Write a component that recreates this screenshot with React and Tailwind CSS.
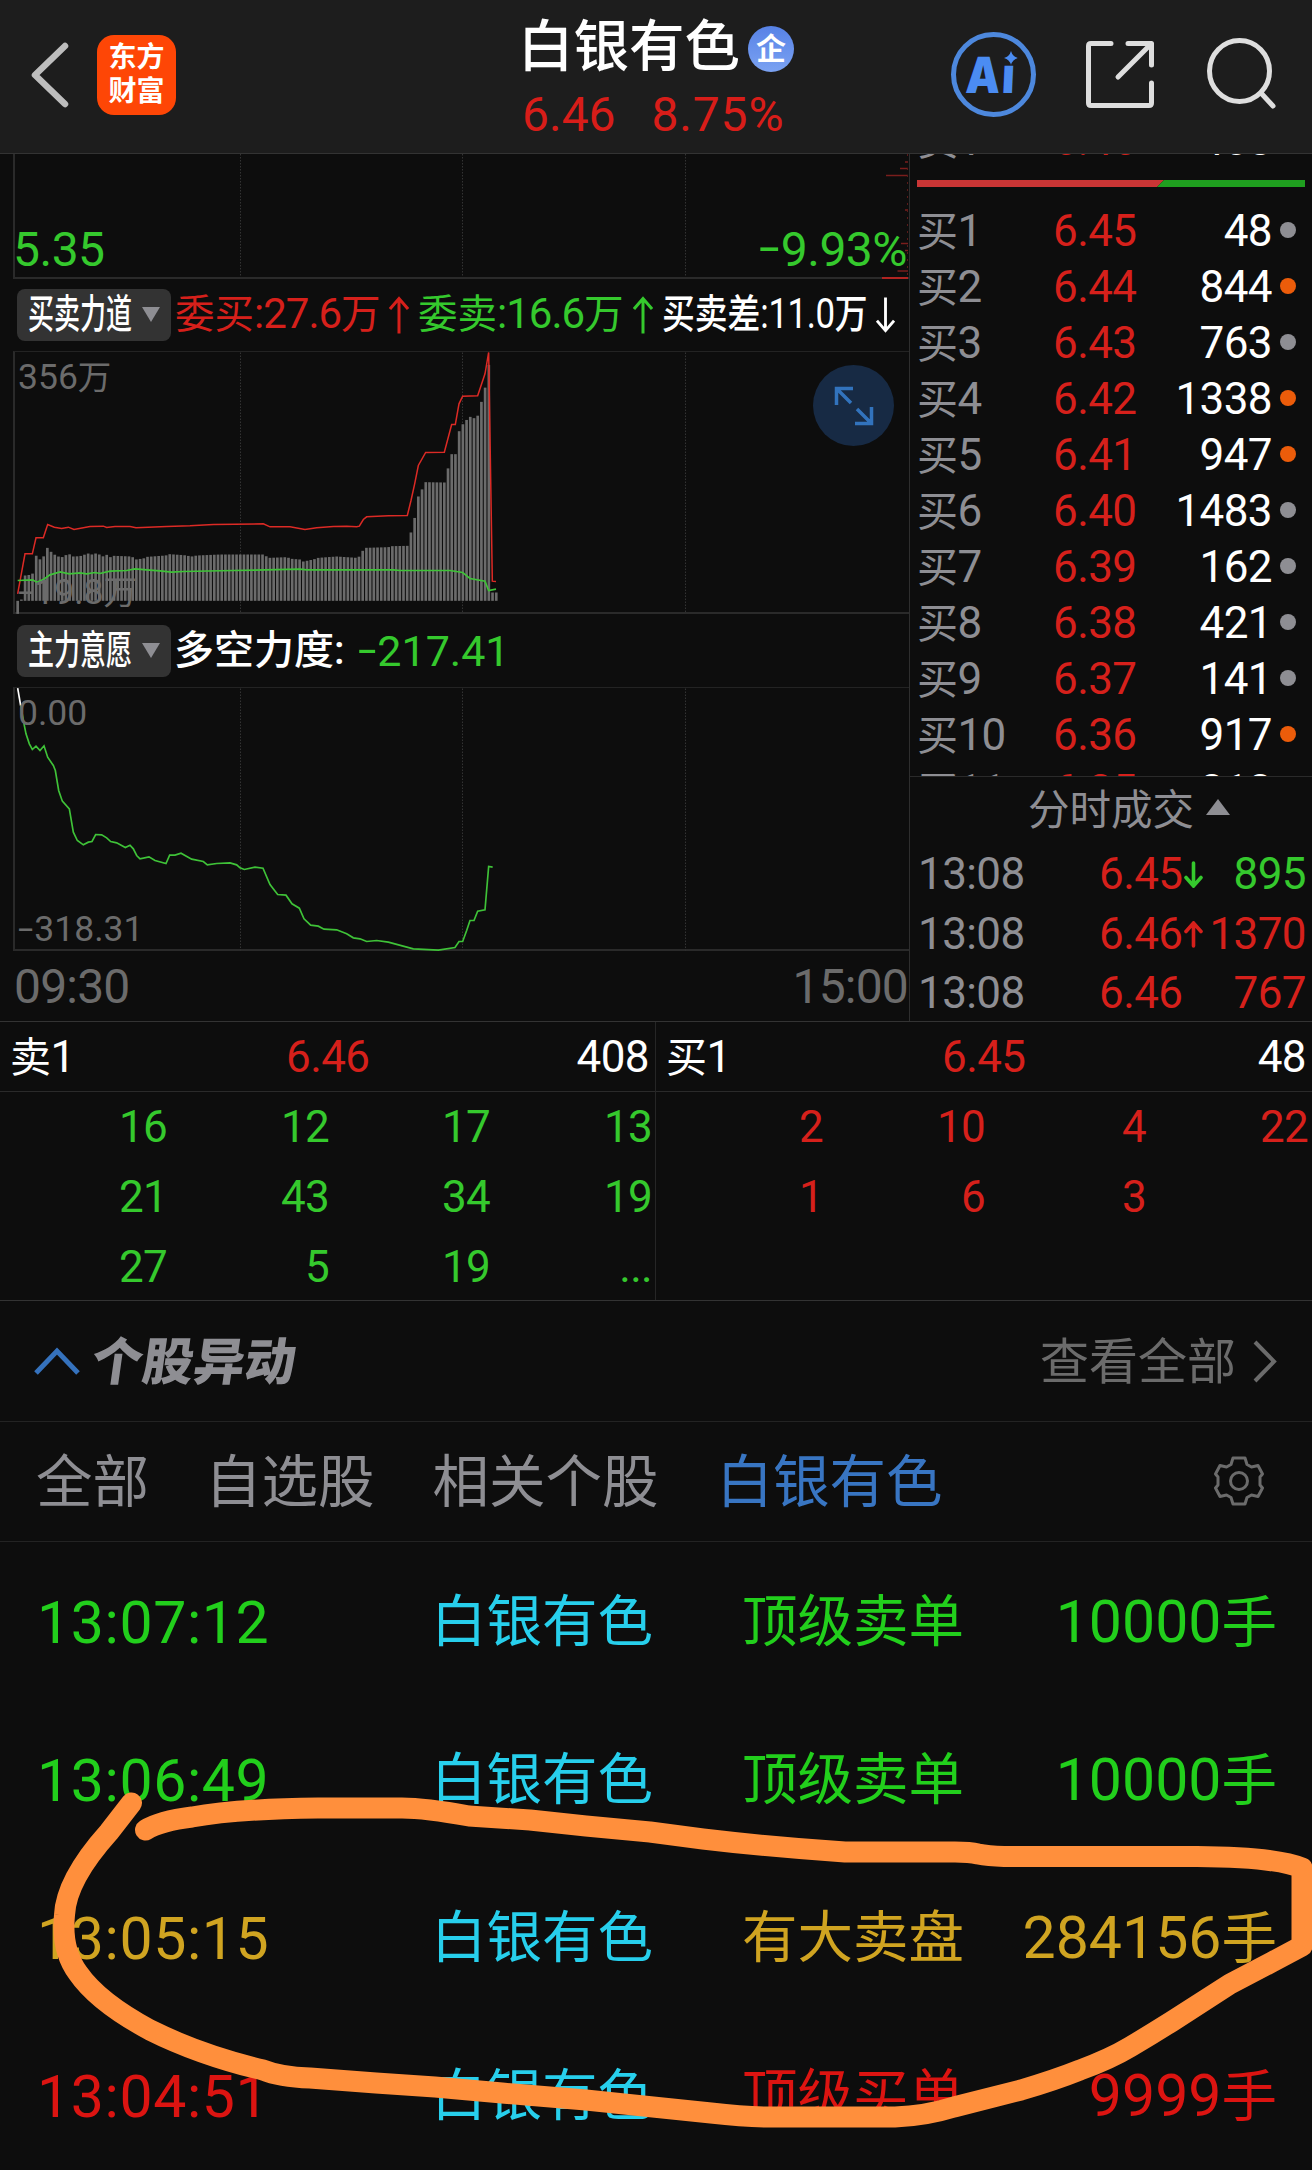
const BIDS = [
  { n: 1, price: '6.45', qty: '48' },
  { n: 2, price: '6.44', qty: '844', hot: true },
  { n: 3, price: '6.43', qty: '763' },
  { n: 4, price: '6.42', qty: '1338', hot: true },
  { n: 5, price: '6.41', qty: '947', hot: true },
  { n: 6, price: '6.40', qty: '1483' },
  { n: 7, price: '6.39', qty: '162' },
  { n: 8, price: '6.38', qty: '421' },
  { n: 9, price: '6.37', qty: '141' },
  { n: 10, price: '6.36', qty: '917', hot: true },
  { n: 11, price: '6.35', qty: '818' },
];

const TICKS = [
  { price: '6.45', dir: 'down', qty: '895', color: 'text-[#35c92d]' },
  { price: '6.46', dir: 'up', qty: '1370', color: 'text-[#d6201b]' },
  { price: '6.46', dir: null, qty: '767', color: 'text-[#d6201b]' },
];

const ALERTS = [
  { time: '13:07:12', kind: '顶级卖单', qty: '10000', color: 'text-[#22cf1c]' },
  { time: '13:06:49', kind: '顶级卖单', qty: '10000', color: 'text-[#22cf1c]' },
  { time: '13:05:15', kind: '有大卖盘', qty: '284156', color: 'text-[#d0a421]' },
  { time: '13:04:51', kind: '顶级买单', qty: '9999', color: 'text-[#dc1411]' },
];

// top edge of the grey bars, as [x, y] in chart space
const BAR_TOPS = [
  [53, 1420], [64, 1378], [75, 1305], [97, 1302], [108, 1245], [119, 1257], [130, 1250], [141, 1221],
  [152, 1233], [163, 1242], [175, 1248], [186, 1250], [197, 1244], [208, 1241], [219, 1248], [240, 1247],
  [264, 1239], [276, 1242], [287, 1239], [298, 1242], [310, 1248], [320, 1243], [331, 1250], [342, 1246],
  [395, 1248], [408, 1257], [430, 1254], [442, 1249], [497, 1245], [508, 1241], [552, 1244], [575, 1248],
  [590, 1245], [660, 1242], [790, 1242], [800, 1248], [810, 1252], [860, 1250], [875, 1255], [900, 1257],
  [910, 1263], [940, 1257], [955, 1252], [1010, 1248], [1070, 1252], [1080, 1247], [1088, 1231], [1098, 1222],
  [1165, 1220], [1176, 1217], [1223, 1216], [1233, 1175], [1244, 1132], [1255, 1068], [1266, 1047],
  [1277, 1025], [1334, 1026], [1344, 984], [1355, 941], [1367, 941], [1377, 873], [1388, 852], [1399, 839],
  [1411, 829], [1422, 833], [1433, 826], [1444, 785], [1455, 745], [1466, 640], [1477, 1356], [1490, 1356],
];

const BUY_LINE =
  '53,1360 75,1240 97,1240 108,1192 130,1192 143,1152 163,1160 185,1164 205,1160 222,1167 270,1158 310,1157 320,1161 345,1158 390,1158 408,1162 500,1158 570,1156 640,1152 790,1150 810,1159 870,1159 915,1167 950,1162 1000,1158 1040,1157 1070,1159 1078,1157 1090,1137 1100,1129 1165,1126 1222,1125 1233,1080 1244,1030 1255,975 1277,936 1333,935 1355,852 1366,852 1377,790 1388,767 1433,766 1455,700 1466,636 1477,1322 1488,1323';
const SELL_LINE =
  '53,1320 98,1318 110,1325 130,1317 150,1303 180,1294 208,1300 240,1297 260,1300 285,1296 300,1299 330,1292 380,1290 405,1285 440,1288 480,1291 515,1295 550,1293 700,1290 900,1286 920,1288 1180,1288 1200,1290 1350,1290 1388,1296 1410,1314 1455,1322 1466,1350 1488,1346';
const FORCE_LINE =
  '62,315 72,370 78,400 88,430 97,447 108,437 120,450 132,436 143,470 160,495 166,510 176,570 187,602 208,625 220,695 232,720 250,733 265,725 276,723 287,702 305,703 320,712 332,723 350,727 376,741 390,734 400,745 410,765 420,775 447,769 465,780 498,789 509,764 525,764 543,758 575,776 610,783 622,793 650,789 690,787 710,793 720,802 733,807 765,800 789,803 810,852 833,882 858,884 876,910 898,923 912,955 932,974 955,977 972,986 1010,988 1040,1000 1060,1012 1080,1015 1100,1023 1130,1020 1165,1025 1240,1045 1315,1049 1365,1041 1377,1023 1388,1023 1400,990 1410,960 1422,960 1433,932 1455,928 1466,798 1478,800';

function topAt(x) {
  const i = BAR_TOPS.findIndex((p) => p[0] >= x);
  if (i <= 0) return BAR_TOPS[i === 0 ? 0 : BAR_TOPS.length - 1][1];
  const [x0, y0] = BAR_TOPS[i - 1];
  const [x1, y1] = BAR_TOPS[i];
  return y0 + ((y1 - y0) * (x - x0)) / (x1 - x0);
}

const BARS = Array.from({ length: 130 }, (_, i) => {
  const x = 53 + i * 11.13;
  return { x, y: i === 0 ? 1420 : topAt(x) };
});

function GridLines({ y1, y2 }) {
  return [240.5, 462.5, 685.5].map((x) => (
    <line key={x} x1={x} x2={x} y1={y1} y2={y2} stroke="#333" strokeWidth="1" strokeDasharray="1.5 1.5" />
  ));
}

// wide, slightly raised minus sign
function Minus() {
  return <span className="inline-block w-[0.46em] origin-left -translate-y-[0.04em] scale-x-[1.55]">-</span>;
}

function Pill({ children }) {
  return (
    <div className="flex h-[52px] w-[154px] flex-none items-center rounded-lg bg-[#333] pl-[11px]">
      <div className="h-[52px] w-[103px]">
        <span className="inline-block origin-left scale-x-[0.65] text-[40px] font-medium leading-[52px] whitespace-nowrap text-white">
          {children}
        </span>
      </div>
      <svg className="ml-[11px] h-[15px] w-[18px]" viewBox="0 0 18 15">
        <path d="M0 0H18L9 15Z" fill="#8e8e93" />
      </svg>
    </div>
  );
}

function LongArrow({ down, className }) {
  return (
    <svg
      className={className}
      viewBox="0 0 20 38"
      fill="none"
      stroke="currentColor"
      strokeWidth="3"
      transform={down ? 'rotate(180)' : undefined}
    >
      <path d="M10 37.500V2M1 13L10 2.500L19 13" />
    </svg>
  );
}

function Header() {
  return (
    <header className="flex h-[154px] items-start border-b border-[#333] bg-[#1d1d1d]">
      <svg className="mt-[41px] ml-[29px] h-[68px] w-[42px]" viewBox="0 0 42 68" fill="none">
        <path d="M36 5L6 34L36 63" stroke="#bdbdbd" strokeWidth="6.500" strokeLinecap="round" strokeLinejoin="round" />
      </svg>
      <div className="mt-[35px] ml-[26px] flex h-20 w-[79px] flex-col items-center justify-center rounded-[17px] bg-[#fe4606] text-[28px] font-bold leading-[34px] text-white">
        <span>东方</span>
        <span>财富</span>
      </div>

      <div className="ml-[342px] w-[293px]">
        <div className="flex h-[72px] items-end">
          <h1 className="h-[54px] text-[55.500px] font-medium leading-[60px] text-white">白银有色</h1>
          <span className="ml-[8px] flex h-[46px] w-[46px] items-center justify-center rounded-full bg-linear-to-b from-[#5782e6] to-[#7ba2f2] text-[30px] font-bold leading-none text-white">
            企
          </span>
        </div>
        <div className="mt-[17px] flex gap-[36px] pl-[4px] text-[48px] leading-[52px] text-[#d81d19]">
          <span>6.46</span>
          <span className="tracking-[0.8px]">8.75%</span>
        </div>
      </div>

      <div className="relative mt-[32px] ml-[140px] flex h-[85px] w-[85px] items-center justify-center rounded-full border-[5px] border-[#4d88dd] text-[#4b8cf2]">
        <span className="-ml-1 scale-x-[0.87] -skew-x-3 font-[Inter] text-[50px] font-black leading-none tracking-[2px]">
          Aı
        </span>
        <svg className="absolute top-[14px] left-[48px] h-[14px] w-[14px]" viewBox="0 0 14 14">
          <path d="M7 0Q8.500 5.500 14 7Q8.500 8.500 7 14Q5.500 8.500 0 7Q5.500 5.500 7 0Z" fill="currentColor" />
        </svg>
      </div>
      <svg className="mt-[40px] ml-[49px] h-[69px] w-[70px]" viewBox="0 0 70 69" fill="none" stroke="#dedede" strokeWidth="5" strokeLinecap="round" strokeLinejoin="round">
        <path d="M26 3.500H6Q3.500 3.500 3.500 6V63Q3.500 65.500 6 65.500H64Q66.500 65.500 66.500 63V43" />
        <path d="M43 3.500H66.500V25M65 5L33 37" />
      </svg>
      <svg className="mt-[36px] ml-[50px] h-[75px] w-[74px]" viewBox="0 0 74 75" fill="none" stroke="#dedede" strokeWidth="5" strokeLinecap="round">
        <ellipse cx="34.500" cy="35" rx="30" ry="30.500" />
        <path d="M56 57L68 70" />
      </svg>
    </header>
  );
}

function PriceChart() {
  const marks = [
    [162, 905], [168.500, 900], [175.500, 886], [210, 905], [243.500, 901], [250.500, 905], [271, 897.500],
  ];
  return (
    <div className="relative h-[125px] border-b-2 border-l-2 border-[#2a2a2a]">
      <svg className="h-[125px] w-[893px]" viewBox="15 154 893 125">
        <GridLines y1={154} y2={277} />
        {marks.map(([y, x]) => (
          <line key={y} x1={x} x2="908" y1={y} y2={y} stroke="#7a1e1c" strokeWidth="1.500" />
        ))}
        <line x1="882" x2="908" y1="278" y2="278" stroke="#b02421" strokeWidth="2" />
        <line x1="907.500" x2="907.500" y1="154" y2="278" stroke="#5a1a19" strokeDasharray="2 5" />
      </svg>
      <div className="absolute inset-x-0 top-[70px] -ml-[2px] flex justify-between pr-[2px] text-[48px] leading-[52px] text-[#35c92d]">
        <span className="tracking-[-0.5px]">5.35</span>
        <span className="tracking-[-0.5px]">
          <Minus />
          9.93%
        </span>
      </div>
    </div>
  );
}

function OrderForceChart() {
  return (
    <div className="relative h-[263px] border-t border-b-2 border-l-2 border-t-[#232323] border-b-[#2a2a2a] border-l-[#2a2a2a]">
      <svg className="h-[262px] w-[893px]" viewBox="15 351.500 893 262">
        <GridLines y1={352} y2={613} />
        <g transform="translate(0 140) scale(.33333)">
          {BARS.map((b) => (
            <rect
              key={b.x}
              x={b.x - 4}
              y={Math.min(b.y, 1381)}
              width="8"
              height={Math.abs(1381 - b.y)}
              fill="#6b6b6b"
            />
          ))}
          <polyline points={BUY_LINE} fill="none" stroke="#dc2a25" strokeWidth="4.500" />
          <polyline points={SELL_LINE} fill="none" stroke="#3fc238" strokeWidth="5" />
        </g>
      </svg>
      <span className="absolute top-[5px] left-[3px] text-[35.500px] leading-[40px] text-[#6b6b6b]">
        356<span className="text-[33.500px]">万</span>
      </span>
      <span className="absolute top-[220px] left-[3px] text-[35.500px] leading-[40px] text-[#6b6b6b]">
        <Minus />
        19.8<span className="text-[33.500px]">万</span>
      </span>
      <button className="absolute top-[13px] right-[15px] flex h-[81px] w-[81px] items-center justify-center rounded-full bg-[#172a44]">
        <svg className="h-[40px] w-[40px]" viewBox="0 0 40 40" fill="none" stroke="#3273bd" strokeWidth="3.500">
          <path d="M19 2.500H2.500V19M2.500 2.500L17 17M21 37.500H37.500V21M37.500 37.500L23 23" />
        </svg>
      </button>
    </div>
  );
}

function IntentChart() {
  return (
    <div className="relative h-[264px] border-t border-b-2 border-l-2 border-t-[#232323] border-b-[#2a2a2a] border-l-[#2a2a2a]">
      <svg className="h-[263px] w-[893px]" viewBox="15 687.500 893 263">
        <GridLines y1={688} y2={950} />
        <g transform="translate(0 600) scale(.33333)" fill="none" strokeWidth="5">
          <polyline points={FORCE_LINE} stroke="#3fc238" />
          <polyline points="53,263 62,315" stroke="#fff" />
        </g>
      </svg>
      <span className="absolute top-[5px] left-[3px] text-[35.500px] leading-[40px] text-[#6b6b6b]">0.00</span>
      <span className="absolute top-[221px] left-[3px] text-[35.500px] leading-[40px] text-[#6b6b6b]">
        <Minus />
        318.31
      </span>
    </div>
  );
}

function Charts() {
  return (
    <div className="w-[910px] flex-none border-r border-[#2e2e2e] pl-[13px]">
      <PriceChart />
      <div className="flex h-[72px] items-center pb-[1px] pl-[4px] text-[39.5px] leading-[52px] whitespace-nowrap">
        <Pill>买卖力道</Pill>
        <span className="ml-[4px] w-[214px] text-[#d6201b]">
          委买<span className="text-[42px] tracking-[-1px]">:27.6</span>万
        </span>
        <LongArrow className="h-[38px] w-[20px] text-[#d6201b]" />
        <span className="ml-[9px] w-[215px] text-[#35c92d]">
          委卖<span className="text-[42px] tracking-[-1px]">:16.6</span>万
        </span>
        <LongArrow className="h-[38px] w-[20px] text-[#35c92d]" />
        <span className="ml-[9px] w-[214px] text-white">
          <span className="inline-block origin-left scale-x-[0.83] font-medium">
            买卖差<span className="text-[42px] font-normal tracking-[-0.5px]">:11.0</span>万
          </span>
        </span>
        <LongArrow down className="h-[38px] w-[19px] flex-none text-white" />
      </div>
      <OrderForceChart />
      <div className="flex h-[73px] items-center pl-[4px] leading-[52px]">
        <Pill>主力意愿</Pill>
        <span className="ml-[3px] text-[40px] font-medium text-white">多空力度:</span>
        <span className="ml-[13px] text-[43px] text-[#35c92d]">
          <Minus />
          217.41
        </span>
      </div>
      <IntentChart />
      <div className="flex h-[70px] justify-between pt-[10px] pr-[1px] pl-[1px] text-[48px] leading-[52px] tracking-[-0.8px] text-[#6b6b6b]">
        <span>09:30</span>
        <span>15:00</span>
      </div>
    </div>
  );
}

function BookRow({ side, n, price, qty, hot, noDot }) {
  return (
    <div className="flex h-[56px] flex-none items-center text-[44px] leading-[56px] tracking-[-0.6px]">
      <span className="w-[136px] text-[#8e8e93]">
        <span className="text-[41px]">{side}</span>
        {n}
      </span>
      <span className="w-[90px] text-[#d6201b]">{price}</span>
      <span className="flex-1 text-right text-white">{qty}</span>
      <span className="ml-[8px] flex w-[32px] -translate-y-px">
        {!noDot && <i className={hot ? 'h-4 w-4 rounded-full bg-[#ec5c0a]' : 'h-4 w-4 rounded-full bg-[#8e8e93]'} />}
      </span>
    </div>
  );
}

function TickArrow({ dir }) {
  if (!dir) return <span className="w-[23px]" />;
  return (
    <svg
      className={dir === 'up' ? 'mx-[2px] w-[19px] text-[#d6201b]' : 'mx-[2px] w-[19px] rotate-180 text-[#35c92d]'}
      viewBox="0 0 19 27"
      fill="none"
      stroke="currentColor"
      strokeWidth="3.600"
      strokeLinecap="round"
    >
      <path d="M9.500 25V2.500M2 10.500L9.500 2L17 10.500" />
    </svg>
  );
}

function OrderBook() {
  return (
    <div className="flex-1">
      <div className="flex h-[623px] flex-col overflow-hidden border-b border-[#2a2a2a] pl-[7px]">
        <div className="-mt-[42px]">
          <BookRow side="卖" n={1} price="6.46" qty="408" noDot />
        </div>
        <svg className="mt-[12px] h-[7px] w-[388px] flex-none" viewBox="0 0 388 7">
          <path d="M0 0H247L240 7H0Z" fill="#c93535" />
          <path d="M247 0H388V7H240Z" fill="#1f9f1f" />
        </svg>
        <div className="mt-[16px]">
          {BIDS.map((b) => (
            <BookRow key={b.n} side="买" {...b} />
          ))}
        </div>
      </div>

      <div className="flex h-[68px] items-center justify-center pl-[36px] text-[41.5px] leading-[60px] text-[#8e8e93]">
        分时成交
        <svg className="mb-[8px] ml-[12px] h-[16px] w-[24px]" viewBox="0 0 24 16">
          <path d="M12 0L24 16H0Z" fill="#8e8e93" />
        </svg>
      </div>
      {TICKS.map((t, i) => (
        <div key={i} className="flex h-[59.500px] items-center pr-[6px] pl-[8px] text-[44px] leading-[59px] tracking-[-0.6px]">
          <span className="w-[181px] text-[#8e8e93]">13:08</span>
          <span className="text-[#d6201b]">{t.price}</span>
          <TickArrow dir={t.dir} />
          <span className={`flex-1 text-right ${t.color}`}>{t.qty}</span>
        </div>
      ))}
    </div>
  );
}

function DepthPanel({ side, price, total, cells, color, className }) {
  return (
    <div className={`w-[656px] ${className}`}>
      <div className="flex h-[70px] items-center border-b border-[#2a2a2a] pr-[6px] text-[44px] tracking-[-0.6px] text-white">
        <span className="w-[286px] pl-[10px]">
          <span className="text-[41px]">{side}</span>1
        </span>
        <span className="flex-1 text-[#d6201b]">{price}</span>
        <span>{total}</span>
      </div>
      <div className={`grid grid-cols-[167px_162px_161px_162px] text-right text-[44px] leading-[70px] tracking-[-0.7px] ${color}`}>
        {cells.map((c, i) => (
          <span key={i}>{c}</span>
        ))}
      </div>
    </div>
  );
}

function Depth() {
  return (
    <section className="flex h-[279px] border-b border-[#333]">
      <DepthPanel
        side="卖"
        price="6.46"
        total="408"
        color="text-[#35c92d]"
        className="border-r border-[#262626]"
        cells={['16', '12', '17', '13', '21', '43', '34', '19', '27', '5', '19', '...']}
      />
      <DepthPanel
        side="买"
        price="6.45"
        total="48"
        color="text-[#d6201b]"
        className=""
        cells={['2', '10', '4', '22', '1', '6', '3']}
      />
    </section>
  );
}

function Alerts() {
  return (
    <section>
      <div className="flex h-[121px] items-center border-b border-[#232323]">
        <svg className="ml-[34px] h-[28px] w-[46px]" viewBox="0 0 46 28" fill="none">
          <path d="M2 26L23 4L44 26" stroke="#3572bd" strokeWidth="5" />
        </svg>
        <h2 className="mt-[3px] ml-[12px] -skew-x-[8deg] text-[51px] font-black leading-[60px] text-[#8e8e93]">个股异动</h2>
        <span className="mt-[3px] ml-auto text-[49px]">
          <span className="text-[#6b6b6b]">查看全部</span>
        </span>
        <svg className="mr-[35px] ml-[17px] h-[43px] w-[24px]" viewBox="0 0 24 43" fill="none">
          <path d="M2 2L21 21.500L2 41" stroke="#6b6b6b" strokeWidth="4" />
        </svg>
      </div>

      <nav className="flex h-[120px] items-center border-b border-[#232323] pt-[4px] pl-[36px] text-[56.500px] text-[#8e8e93]">
        <span>全部</span>
        <span className="ml-[56px]">自选股</span>
        <span className="ml-[58px]">相关个股</span>
        <span className="ml-[58px] text-[#3875c2]">白银有色</span>
        <svg className="mr-[48px] mb-[5px] ml-auto h-[50px] w-[50px]" viewBox="0 0 50 50" fill="none" stroke="#6b6b6b" strokeWidth="3" strokeLinejoin="round">
          <path d="M19 2H31L33 8.500L37.500 11L44 9.500L48.500 18L46 21V29L48.500 32L44 40.500L37.500 39L33 41.500L31 48H19L17 41.500L12.500 39L6 40.500L1.500 32L4 29V21L1.500 18L6 9.500L12.500 11L17 8.500Z" />
          <circle cx="25" cy="25" r="8.500" />
        </svg>
      </nav>

      <div className="relative">
        {ALERTS.map((a) => (
          <div key={a.time} className={`flex h-[158px] items-center pt-[4px] pr-[35px] pl-[37px] text-[59px] leading-[80px] ${a.color}`}>
            <span className="w-[394px] tracking-[0.6px]">{a.time}</span>
            <span className="w-[311px] text-[55.500px] text-[#27cfec]">白银有色</span>
            <span className="text-[55.500px]">{a.kind}</span>
            <span className="flex-1 text-right">
              {a.qty}
              <span className="text-[55.500px]">手</span>
            </span>
          </div>
        ))}
        {/* hand-drawn marker loop */}
        <svg className="absolute top-0 left-0 h-[628px] w-[1312px]" viewBox="0 1542 1312 628" fill="none">
          <path
            d="M131.500 1803L109 1832Q66 1880 64.500 1915Q61 1950 78 1973Q98 2002 150 2030Q200 2055 263 2070Q280 2077 310 2078L376 2083L435 2087L502 2093L586 2100L653 2107L711 2113Q745 2117 770 2117H895Q925 2116 954 2107L1021 2090Q1055 2080 1080 2070Q1110 2059 1130 2047Q1152 2034 1171 2022L1230 1984L1272 1962L1302 1946V1868Q1275 1857 1197 1856.500H1004Q988 1856 978 1854Q970 1852 955 1852H845Q770 1847 703 1839L650 1832L586 1826L530 1820L469 1816Q425 1808 402 1808H318Q235 1809 192 1817Q160 1821 145.500 1830"
            stroke="#ff8f3c"
            strokeWidth="21"
            strokeLinecap="round"
            strokeLinejoin="round"
          />
        </svg>
      </div>
    </section>
  );
}

export default function App() {
  return (
    <div className="h-[2170px] w-[1312px] overflow-hidden bg-[#0d0d0d] font-[Roboto,'Noto_Sans_CJK_SC',sans-serif]">
      <Header />
      <div className="flex h-[868px] border-b border-[#333]">
        <Charts />
        <OrderBook />
      </div>
      <Depth />
      <Alerts />
    </div>
  );
}
